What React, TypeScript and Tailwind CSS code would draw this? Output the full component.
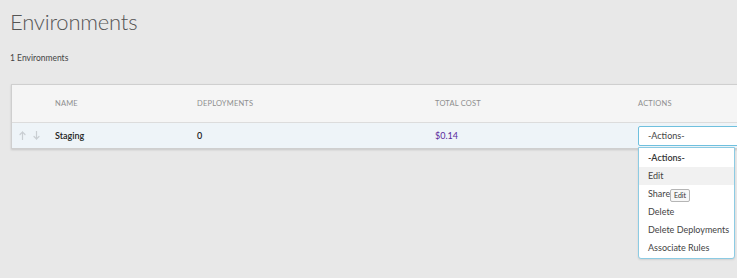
const COLUMNS = ['Name', 'Deployments', 'Total Cost', 'Actions'] as const;
const ACTIONS = ['-Actions-', 'Edit', 'Share', 'Delete', 'Delete Deployments', 'Associate Rules'];

function Arrow({ up }: { up?: boolean }) {
  return (
    <svg width="7" height="9" viewBox="0 0 7 9" className="text-[#c9ced2]">
      <g fill="none" stroke="currentColor" strokeWidth="1.2" strokeLinecap="round">
        {up ? (
          <>
            <path d="M3.5 8.5V1" />
            <path d="M1 3.5L3.5 1L6 3.5" />
          </>
        ) : (
          <>
            <path d="M3.5 0.5V8" />
            <path d="M1 5.5L3.5 8L6 5.5" />
          </>
        )}
      </g>
    </svg>
  );
}

export default function App() {
  return (
    <div
      className="relative w-[737px] h-[278px] overflow-hidden bg-[#e8e8e8] text-[#333]"
      style={{ fontFamily: 'Lato, "Open Sans", sans-serif' }}
    >
      {/* Page heading */}
      <h1 className="pl-[10px] pt-[7px] text-[22px] leading-[30px] font-light tracking-[-0.2px] text-[#555]">
        Environments
      </h1>
      <div className="pl-[10px] mt-[15px] text-[8.5px] leading-[12px] text-[#444]">1 Environments</div>

      {/* Table card */}
      <div className="ml-[11px] mt-[20px] w-[760px] border border-[#cfcfcf] bg-white shadow-[0_1px_2px_rgba(0,0,0,0.15)]">
        <div className="flex h-[38px] items-center bg-[#f5f5f5] border-b border-[#dcdcdc] text-[7.5px] uppercase tracking-[0.2px] text-[#8e8e8e]">
          <div className="w-[43px]" />
          <div className="w-[142px]">{COLUMNS[0]}</div>
          <div className="w-[238px]">{COLUMNS[1]}</div>
          <div className="w-[203px]">{COLUMNS[2]}</div>
          <div>{COLUMNS[3]}</div>
        </div>
        <div className="flex h-[25px] items-center bg-[#eef4f8] text-[9px]">
          <div className="flex w-[43px] items-center gap-[7px] pl-[7px]">
            <Arrow up />
            <Arrow />
          </div>
          <div className="w-[142px] font-semibold text-[#222]">Staging</div>
          <div className="w-[238px] font-semibold text-[#222]">0</div>
          <div className="w-[203px] text-[#5a2a9c]">$0.14</div>
          <div className="flex h-[20px] w-[110px] items-center rounded-[2px] border border-[#6fc0de] bg-white pl-[9px] text-[9px] text-[#444]">
            -Actions-
          </div>
        </div>
      </div>

      {/* Open select list */}
      <div className="absolute left-[638px] top-[147px] w-[97px] rounded-b-[3px] border border-[#8ccbe3] bg-white py-[1px] text-[9px] text-[#444] shadow-[0_1px_2px_rgba(0,0,0,0.1)]">
        {ACTIONS.map((a, i) => (
          <div
            key={a}
            className={`flex h-[18px] items-center pl-[9px] ${i === 0 ? 'font-semibold text-[#333]' : ''} ${
              i === 1 ? 'bg-[#f1f1f1]' : ''
            }`}
          >
            {a}
          </div>
        ))}
      </div>

      {/* Tooltip */}
      <div className="absolute left-[670px] top-[189px] flex h-[13px] items-center rounded-[2px] border border-[#b5b5b5] bg-[#f7f7f7] px-[3px] text-[7px] text-[#333]">
        Edit
      </div>
    </div>
  );
}
